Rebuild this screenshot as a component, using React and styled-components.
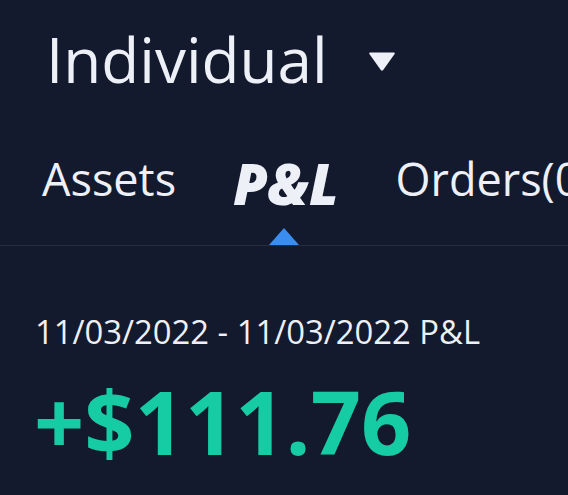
import styled, { createGlobalStyle } from 'styled-components'

const Global = createGlobalStyle`
    html, body {
        margin: 0;
        background: #141a2d;
    }
    body {
        font-family: "Open Sans", "Noto Sans", sans-serif;
        color: #eef0f7;
    }
`

const Page = styled.div`
    width: 568px;
    height: 495px;
    overflow: hidden;
    background: #141a2d;
`

const Header = styled.div`
    display: flex;
    align-items: center;
    gap: 40px;
    padding: 28px 0 0 46px;
`

const Title = styled.h1`
    margin: 0;
    font-size: 62px;
    font-weight: 500;
    line-height: 1;
    color: #eef0f7;
`

const Caret = styled.svg`
    width: 28px;
    height: 21px;
    margin-top: 4px;
`

const TabBar = styled.nav`
    display: flex;
    align-items: flex-start;
    gap: 57px;
    margin-top: 66px;
    padding-left: 42px;
    border-bottom: 1px solid #262d3f;
    white-space: nowrap;
`

const Tab = styled.div`
    display: flex;
    flex-direction: column;
    align-items: center;
    margin-top: ${p => (p.$active ? '-1px' : '0')};
    font-size: ${p => (p.$active ? '56px' : '45px')};
    font-weight: ${p => (p.$active ? 800 : 400)};
    font-style: ${p => (p.$active ? 'italic' : 'normal')};
    line-height: 1;
    color: #eef0f7;
`

const Indicator = styled.span`
    width: 0;
    height: 0;
    margin-top: 17px;
    margin-right: 4px;
    border-left: 15px solid transparent;
    border-right: 15px solid transparent;
    border-bottom: 17px solid #3a8ef0;
`

const Summary = styled.section`
    padding: 70px 0 0 35px;
`

const Period = styled.div`
    font-size: 32.8px;
    line-height: 1;
    color: #eef0f7;
`

const Amount = styled.div`
    margin-top: 28px;
    margin-left: -1px;
    font-size: 88px;
    font-weight: 700;
    line-height: 1;
    color: #15cca4;
`

const App = () => {
    return <>
        <Global />
        <Page>
            <Header>
                <Title>Individual</Title>
                <Caret viewBox="0 0 28 21">
                    <path d="M2 1.5 H26 Q27.5 1.5 26.6 3 L15.2 19 Q14 20.5 12.8 19 L1.4 3 Q0.5 1.5 2 1.5 Z" fill="#eef0f7" />
                </Caret>
            </Header>
            <TabBar>
                <Tab>Assets</Tab>
                <Tab $active>
                    P&amp;L
                    <Indicator />
                </Tab>
                <Tab>Orders(0)</Tab>
            </TabBar>
            <Summary>
                <Period>11/03/2022 - 11/03/2022 P&amp;L</Period>
                <Amount>+$111.76</Amount>
            </Summary>
        </Page>
    </>
}

export default App
